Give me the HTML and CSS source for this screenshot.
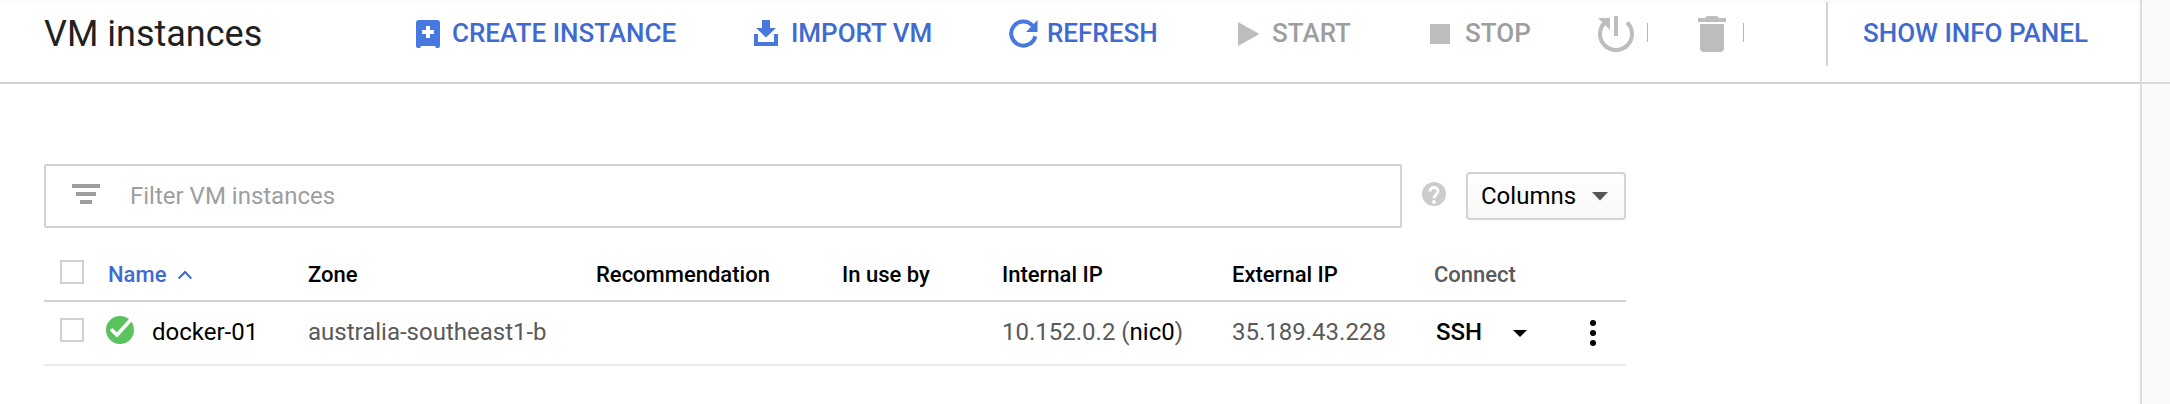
FILE: index.html
```html
<!DOCTYPE html>
<html lang="en">
<head>
<meta charset="utf-8">
<title>VM instances</title>
<link rel="stylesheet" href="styles.css">
</head>
<body>
<div class="page">
  <main class="main">
    <header class="toolbar">
      <h1 class="title">VM instances</h1>
      <div class="action">
        <svg class="icon" width="24" height="36" viewBox="0 0 24 36"><path fill="#4678e0" fill-rule="evenodd" d="M3 4h18a3 3 0 0 1 3 3v23q0 2-2 2h-1q-2 0-2-2H5q0 2-2 2H2q-2 0-2-2V7a3 3 0 0 1 3-3zM10 10v4H6v4h4v4h4v-4h4v-4h-4v-4z"/></svg>
        <span class="label">CREATE INSTANCE</span>
      </div>
      <div class="action action-import">
        <svg class="icon" width="24" height="36" viewBox="0 0 24 36"><path fill="#4678e0" d="M8 4h8v8h6L12 21.500 2 12h6zM0 18h4v8h16v-8h4v12H0z"/></svg>
        <span class="label">IMPORT VM</span>
      </div>
      <div class="action action-refresh">
        <svg class="icon" width="29" height="36" viewBox="0 0 29 36"><path fill="none" stroke="#4678e0" stroke-width="4" d="M23.500 9.600A12.200 12 0 1 0 26.300 20.200"/><path fill="#4678e0" d="M28.500 4v12H17z"/></svg>
        <span class="label">REFRESH</span>
      </div>
      <div class="action disabled">
        <svg class="icon" width="22" height="36" viewBox="0 0 22 36"><path fill="#bdbdbd" d="M0 6l21.500 12L0 30z"/></svg>
        <span class="label">START</span>
      </div>
      <div class="action action-stop disabled">
        <svg class="icon" width="20" height="36" viewBox="0 0 20 36"><path fill="#bdbdbd" d="M0 8h20v20H0z"/></svg>
        <span class="label">STOP</span>
      </div>
      <div class="action tight">
        <svg class="icon" width="36" height="36" viewBox="0 0 36 36"><path fill="none" stroke="#bdbdbd" stroke-width="4" d="M6.900 6.500A16 16 0 1 0 29.100 6.500"/><path fill="#bdbdbd" d="M16 0h4v20h-4zM0 2h12v12z"/></svg>
        <i class="tick"></i>
      </div>
      <div class="action tight">
        <svg class="icon" width="28" height="36" viewBox="0 0 28 36"><path fill="#bdbdbd" d="M0 2h7l2-2h10l2 2h7v4H0zM2 8h24v24q0 4-4 4H6q-4 0-4-4z"/></svg>
        <i class="tick"></i>
      </div>
      <div class="info"><span class="label">SHOW INFO PANEL</span></div>
    </header>

    <section class="content">
      <div class="filter-row">
        <div class="filter">
          <svg width="28" height="20" viewBox="0 0 28 20"><path fill="#9e9e9e" d="M0 0h28v4H0zM4 8h20v4H4zM8 16h12v4H8z"/></svg>
          <span>Filter VM instances</span>
        </div>
        <svg class="help" width="24" height="24" viewBox="0 0 24 24"><circle cx="12" cy="12" r="12" fill="#ccc"/><path fill="none" stroke="#fff" stroke-width="2.800" d="M8 9.500C8 4.200 16 4.200 16 9.300c0 3-4 3.400-4 7"/><circle cx="12" cy="20" r="1.900" fill="#fff"/></svg>
        <div class="columns"><span>Columns</span><svg width="16" height="9" viewBox="0 0 16 9"><path fill="#555" d="M0 0h16L8 8.500z"/></svg></div>
      </div>

      <div class="grid head">
        <i class="checkbox"></i>
        <div class="sorted"><span>Name</span><svg width="14" height="10" viewBox="0 0 14 10"><path fill="none" stroke="#3f6ad0" stroke-width="2" d="M.7 8.500L7 2l6.300 6.500"/></svg></div>
        <div><span>Zone</span></div>
        <div><span>Recommendation</span></div>
        <div><span>In use by</span></div>
        <div><span>Internal IP</span></div>
        <div><span>External IP</span></div>
        <div class="muted"><span>Connect</span></div>
      </div>
      <div class="grid row">
        <i class="checkbox"></i>
        <div class="instance"><svg width="28" height="28" viewBox="0 0 28 28"><circle cx="14" cy="14" r="14" fill="#5ac35d"/><path fill="none" stroke="#fff" stroke-width="3.600" d="M5 13.200l6 5.800L24.500 4"/></svg><span class="name">docker-01</span></div>
        <div class="muted"><span>australia-southeast1-b</span></div>
        <div></div>
        <div></div>
        <div class="muted"><span>10.152.0.2 (<span class="nic">nic0</span>)</span></div>
        <div class="muted"><span>35.189.43.228</span></div>
        <div class="connect"><span class="ssh">SSH</span><svg width="14" height="7" viewBox="0 0 14 7"><path d="M0 0h14L7 7z"/></svg></div>
        <svg class="more" width="6" height="26" viewBox="0 0 6 26"><circle cx="3" cy="3" r="3"/><circle cx="3" cy="13" r="3"/><circle cx="3" cy="23" r="3"/></svg>
      </div>
    </section>
  </main>
  <aside class="side"></aside>
</div>
</body>
</html>
```
FILE: styles.css
```css
* { box-sizing: border-box; }
body { margin: 0; background: #fff; font-family: Roboto, "Noto Sans", sans-serif; color: #000; font-size: 24px; line-height: 1; }
svg { display: block; flex: none; }
span { white-space: nowrap; }
.page { display: flex; height: 404px; overflow: hidden; }
.main { width: 2140px; flex: none; }
.side { flex: 1; border-left: 2px solid #dcdcdc; background: linear-gradient(#dcdcdc, #dcdcdc) 0 82px / 100% 2px no-repeat #fafafa; }

.toolbar { display: grid; grid-template-columns: 416px 338px 255px 229px 192px 168px 100px 128px 1fr; height: 84px; padding-bottom: 14px; border-bottom: 2px solid #d3d3d3; background: linear-gradient(#f9f9f9, #fff 4px); }
.title { margin: 0; padding-left: 44px; display: flex; align-items: center; font-size: 36px; font-weight: 400; color: #212121; }
.action { display: flex; align-items: center; gap: 12px; }
.action-import { gap: 13px; }
.action-refresh { gap: 9px; }
.action-stop { gap: 15px; }
.label { font-size: 26px; font-weight: 500; color: #3f6ad0; padding-bottom: 2px; }
.disabled .label { color: #9e9e9e; }
.tick { width: 1px; height: 19px; background: #b5b5b5; margin-bottom: 3px; }
.tight { gap: 13px; }
.tight + .tight { gap: 17px; }
.info { height: 64px; margin-top: 2px; border-left: 2px solid #d3d3d3; padding-left: 35px; display: flex; align-items: center; }

.content { width: 1626px; padding: 80px 0 0 44px; }
.filter-row { display: flex; height: 64px; }
.filter { width: 1358px; border: 2px solid #d3d3d3; border-radius: 2px; display: flex; align-items: center; gap: 30px; padding-left: 26px; color: #9e9e9e; }
.filter svg { margin-bottom: 4px; }
.help { margin: 18px 20px 0; }
.columns { width: 160px; height: 48px; margin-top: 8px; border: 2px solid #d3d3d3; border-radius: 4px; background: linear-gradient(#fff, #f8f8f8); display: flex; align-items: center; justify-content: space-between; padding: 0 16px 0 13px; }

.grid { display: grid; grid-template-columns: 48px 200px 288px 246px 160px 230px 202px 156px auto; padding-left: 16px; align-items: center; }
.head { height: 54px; margin-top: 20px; padding-top: 2px; border-bottom: 2px solid #d3d3d3; font-size: 22px; font-weight: 500; }
.row { height: 64px; padding-bottom: 6px; border-bottom: 2px solid #e9e9e9; }
.checkbox { width: 24px; height: 24px; border: 2px solid #d0d0d0; }
.head .checkbox { margin-bottom: 6px; }
.sorted { display: flex; align-items: center; gap: 12px; color: #3f6ad0; }
.muted { color: #5a5a5a; }
.row .muted, .name, .connect { padding-top: 3px; }
.instance { display: flex; align-items: center; gap: 18px; margin-left: -2px; }
.nic { color: #000; }
.connect { display: flex; align-items: center; gap: 31px; padding-left: 2px; }
.connect svg { margin-top: 3px; }
.ssh { font-weight: 500; }
.more { margin-top: 6px; }
```
